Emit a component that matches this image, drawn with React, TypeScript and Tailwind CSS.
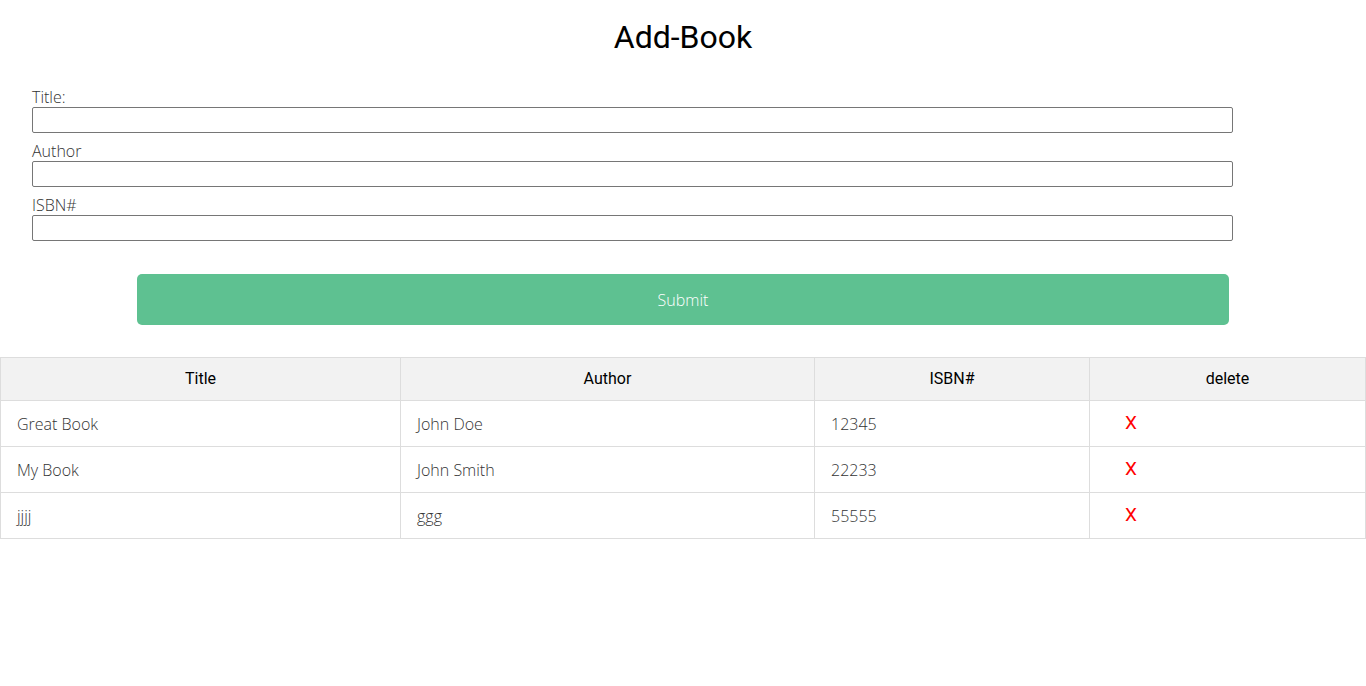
import React, { useState } from "react";

interface Book {
  title: string;
  author: string;
  isbn: string;
}

const BOOKS: Book[] = [
  { title: "Great Book", author: "John Doe", isbn: "12345" },
  { title: "My Book", author: "John Smith", isbn: "22233" },
  { title: "jjjj", author: "ggg", isbn: "55555" },
];

const body = { fontFamily: "'Open Sans', 'Liberation Sans', sans-serif" };
const head = { fontFamily: "Roboto, 'Liberation Sans', sans-serif" };

function Field({ label }: { label: string }) {
  return (
    <div className="mb-[8px]">
      <label className="block text-[16px] leading-[20px] font-light text-[#333]">{label}</label>
      <input
        type="text"
        className="block w-full h-[26px] border border-[#767676] rounded-[2px] bg-white px-1 outline-none"
      />
    </div>
  );
}

export default function App() {
  const [books] = useState<Book[]>(BOOKS);

  return (
    <div className="min-h-screen bg-white" style={body}>
      <h1 className="text-center text-[32px] leading-[40px] pt-[17px] text-black" style={head}>
        Add-Book
      </h1>

      {/* Form */}
      <form className="mt-[30px] pl-[32px] w-[1233px]" onSubmit={(e) => e.preventDefault()}>
        <Field label="Title:" />
        <Field label="Author" />
        <Field label="ISBN#" />
        <div className="pt-[25px] pl-[105px] pr-[4px]">
          <button
            type="submit"
            className="w-full h-[51px] rounded-[5px] bg-[#5ec191] text-white text-[16px] font-light"
          >
            Submit
          </button>
        </div>
      </form>

      {/* Table */}
      <table className="mt-[32px] w-full table-fixed border-collapse">
        <colgroup>
          <col className="w-[400px]" />
          <col className="w-[414px]" />
          <col className="w-[275px]" />
          <col />
        </colgroup>
        <thead>
          <tr className="bg-[#f2f2f2] h-[43px]">
            {["Title", "Author", "ISBN#", "delete"].map((h) => (
              <th
                key={h}
                className="border border-[#dddddd] text-center text-[16px] font-normal text-black"
                style={head}
              >
                {h}
              </th>
            ))}
          </tr>
        </thead>
        <tbody>
          {books.map((b, i) => (
            <tr key={i} className="h-[46px]">
              <td className="border border-[#dddddd] pl-[16px] text-[16px] font-light text-[#333]">{b.title}</td>
              <td className="border border-[#dddddd] pl-[16px] text-[16px] font-light text-[#333]">{b.author}</td>
              <td className="border border-[#dddddd] pl-[16px] text-[16px] font-light text-[#333]">{b.isbn}</td>
              <td className="border border-[#dddddd] pl-[35px]">
                <span className="text-[19px] text-[#ff0000]" style={head}>
                  X
                </span>
              </td>
            </tr>
          ))}
        </tbody>
      </table>
    </div>
  );
}
